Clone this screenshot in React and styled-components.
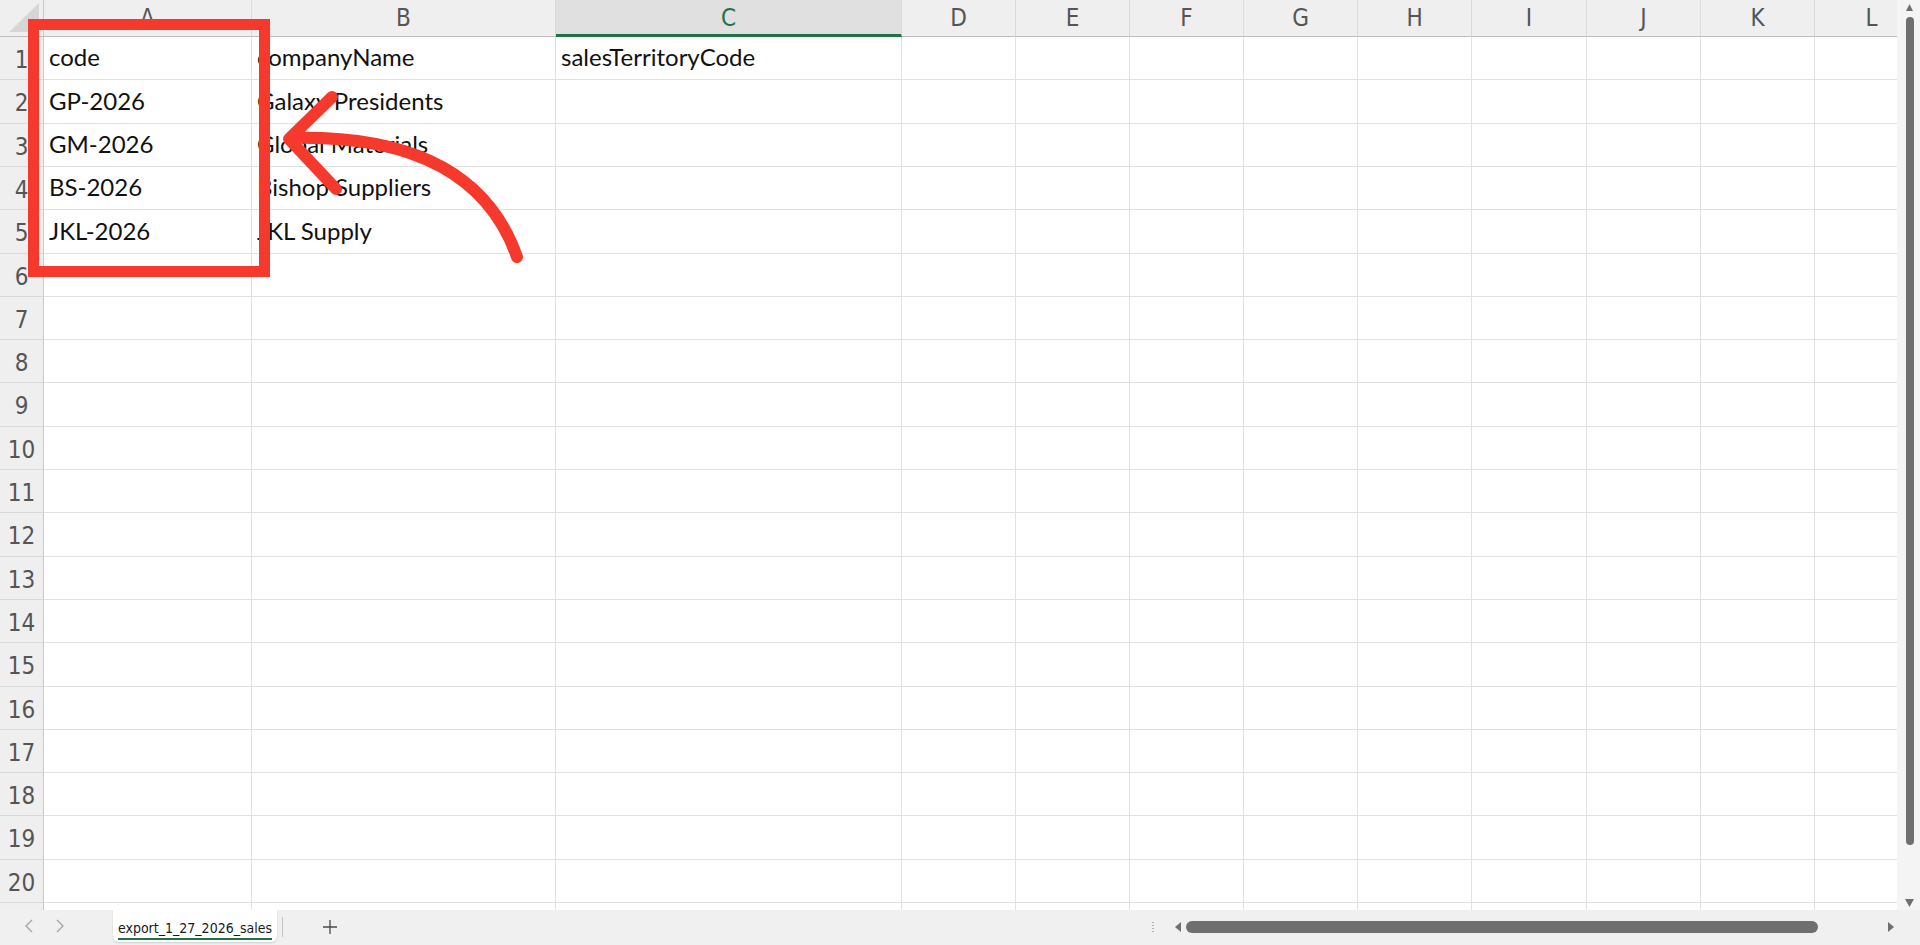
import React from 'react'
import styled, { createGlobalStyle } from 'styled-components'

const GlobalStyle = createGlobalStyle`
  html, body {
    margin: 0;
    padding: 0;
    background: #ffffff;
  }
  body {
    overflow: hidden;
  }
`

const CELL_FONT = `'Lato', 'Open Sans', sans-serif`
const UI_FONT = `'Liberation Sans Narrow', 'DejaVu Sans Condensed', 'Roboto', sans-serif`

const COLUMNS = [
  { key: 'A', w: 208 },
  { key: 'B', w: 304 },
  { key: 'C', w: 346, active: true },
  { key: 'D', w: 114 },
  { key: 'E', w: 114 },
  { key: 'F', w: 114 },
  { key: 'G', w: 114 },
  { key: 'H', w: 114 },
  { key: 'I', w: 115 },
  { key: 'J', w: 114 },
  { key: 'K', w: 114 },
  { key: 'L', w: 114 },
]

const HEADER_H = 37
const ROW_PITCH = 43.3
const ROW_COUNT = 21
const LABELLED_ROWS = 20 // row 21 only shows as a thin strip at the bottom

const DATA = [
  ['code', 'companyName', 'salesTerritoryCode'],
  ['GP-2026', 'Galaxy Presidents'],
  ['GM-2026', 'Global Materials'],
  ['BS-2026', 'Bishop Suppliers'],
  ['JKL-2026', 'JKL Supply'],
]

// row heights rounded so the gridlines land on whole pixels
const rowHeights = Array.from({ length: ROW_COUNT }, (_, i) =>
  Math.round(HEADER_H + ROW_PITCH * (i + 1)) - Math.round(HEADER_H + ROW_PITCH * i)
)

const Window = styled.div`
  width: 1920px;
  height: 945px;
  display: grid;
  grid-template-rows: 910px 35px;
  background: #f0f0f0;
  overflow: hidden;
`

const Top = styled.div`
  display: grid;
  grid-template-columns: 1897px 23px;
  min-height: 0;
`

const Sheet = styled.div`
  position: relative;
  overflow: hidden;
  background: #ffffff;
`

const Row = styled.div`
  display: flex;
  height: ${({ $h }) => $h}px;
`

const Corner = styled.div`
  flex: 0 0 44px;
  height: 100%;
  box-sizing: border-box;
  background: #efefef;
  border-right: 1px solid #c9c9c9;
  border-bottom: 1px solid #bdbdbd;
  display: flex;
  align-items: flex-end;
  justify-content: flex-end;
  padding: 0 4px 4px 0;
`

const ColHead = styled.div`
  flex: 0 0 ${({ $w }) => $w}px;
  height: 100%;
  box-sizing: border-box;
  display: flex;
  align-items: center;
  justify-content: center;
  background: ${({ $active }) => ($active ? '#e0e0e0' : '#efefef')};
  border-right: 1px solid #d9d9d9;
  border-bottom: ${({ $active }) => ($active ? '3px solid #217346' : '1px solid #bdbdbd')};
  color: ${({ $active }) => ($active ? '#217346' : '#555555')};
  font-family: ${UI_FONT};
  font-size: 24px;
  padding-top: ${({ $active }) => ($active ? '2px' : '0')};
`

const RowHead = styled.div`
  flex: 0 0 44px;
  height: 100%;
  box-sizing: border-box;
  display: flex;
  align-items: center;
  justify-content: center;
  padding-top: 3px;
  background: #efefef;
  border-right: 1px solid #c9c9c9;
  border-bottom: 1px solid #dadada;
  color: #555555;
  font-family: ${UI_FONT};
  font-size: 24px;
`

const Cell = styled.div`
  flex: 0 0 ${({ $w }) => $w}px;
  height: 100%;
  box-sizing: border-box;
  display: flex;
  align-items: flex-end;
  padding: 0 0 7px 5px;
  border-right: 1px solid #e1e1e1;
  border-bottom: 1px solid #e1e1e1;
  font-family: ${CELL_FONT};
  font-size: 24px;
  line-height: 1.2;
  color: #111111;
  white-space: nowrap;
  overflow: visible;
`

const Annotation = styled.svg`
  position: absolute;
  left: 0;
  top: 0;
  pointer-events: none;
`

const VScroll = styled.div`
  background: #f4f4f4;
  display: flex;
  flex-direction: column;
  align-items: center;
  padding: 4px 0 3px 2px;
`

const VThumb = styled.div`
  width: 8px;
  height: 828px;
  margin: 6px 0 auto;
  border-radius: 4px;
  background: #6f6f6f;
`

const BottomBar = styled.div`
  display: flex;
  align-items: stretch;
  background: #f0f0f0;
  font-family: ${UI_FONT};
`

const NavGroup = styled.div`
  flex: 0 0 113px;
  display: flex;
  align-items: center;
  gap: 23px;
  padding: 0 0 4px 25px;
  box-sizing: border-box;
  color: #a3a3a3;
`

const Tab = styled.div`
  flex: 0 0 164px;
  height: 32px;
  box-sizing: border-box;
  background: #ffffff;
  border-radius: 0 0 6px 6px;
  box-shadow: 0 1px 2px rgba(0, 0, 0, 0.14);
  display: flex;
  align-items: center;
  justify-content: center;
`

const TabLabel = styled.span`
  font-size: 14px;
  font-weight: 500;
  color: #1a1a1a;
  white-space: nowrap;
  padding: 3px 0 2px;
  border-bottom: 2px solid #217346;
  margin-top: 4px;
`

const TabDivider = styled.div`
  flex: 0 0 1px;
  height: 20px;
  align-self: center;
  margin: 0 0 2px 5px;
  background: #c4c4c4;
`

const AddSheet = styled.div`
  flex: 0 0 auto;
  display: flex;
  align-items: center;
  padding: 0 0 2px 40px;
  color: #4a4a4a;
`

const HScrollArea = styled.div`
  margin-left: auto;
  flex: 0 0 775px;
  display: flex;
  align-items: center;
  padding-bottom: 2px;
  box-sizing: border-box;
`

const Splitter = styled.div`
  width: 2px;
  height: 12px;
  margin: 0 21px 0 7px;
  background-image: radial-gradient(circle, #b3b3b3 0.9px, transparent 1.1px);
  background-size: 2px 3px;
`

const HThumb = styled.div`
  flex: 0 0 632px;
  height: 12px;
  margin-left: 5px;
  border-radius: 6px;
  background: #6f6f6f;
`

const ArrowGlyph = styled.svg`
  display: block;
  flex: 0 0 auto;
`

const HRight = styled(ArrowGlyph)`
  margin-left: 70px;
`

const CornerMark = () => (
  <svg width="30" height="29" viewBox="0 0 30 29">
    <polygon points="30,0 30,29 0,29" fill="#d6d6d6" />
  </svg>
)

const Chevron = ({ dir }) => (
  <svg width="8" height="14" viewBox="0 0 8 14">
    <polyline
      points={dir === 'left' ? '7,1 1,7 7,13' : '1,1 7,7 1,13'}
      fill="none"
      stroke="currentColor"
      strokeWidth="1.3"
    />
  </svg>
)

const Plus = () => (
  <svg width="14" height="14" viewBox="0 0 14 14">
    <path d="M7 0 V14 M0 7 H14" stroke="currentColor" strokeWidth="1.3" />
  </svg>
)

const Tri = ({ dir, w = 8, h = 8 }) => {
  const pts = {
    up: `0,${h} ${w / 2},0 ${w},${h}`,
    down: `0,0 ${w},0 ${w / 2},${h}`,
    left: `${w},0 ${w},${h} 0,${h / 2}`,
    right: `0,0 ${w},${h / 2} 0,${h}`,
  }[dir]
  return (
    <ArrowGlyph width={w} height={h} viewBox={`0 0 ${w} ${h}`}>
      <polygon points={pts} fill="#6f6f6f" strokeLinejoin="round" />
    </ArrowGlyph>
  )
}

const App = () => {
  return (
    <Window>
      <GlobalStyle />
      <Top>
        <Sheet>
          <Row $h={HEADER_H}>
            <Corner>
              <CornerMark />
            </Corner>
            {COLUMNS.map((c) => (
              <ColHead key={c.key} $w={c.w} $active={c.active}>
                {c.key}
              </ColHead>
            ))}
          </Row>

          {rowHeights.map((h, r) => (
            <Row key={r} $h={h}>
              <RowHead>{r < LABELLED_ROWS ? r + 1 : null}</RowHead>
              {COLUMNS.map((c, ci) => (
                <Cell key={c.key} $w={c.w}>
                  {DATA[r] && DATA[r][ci]}
                </Cell>
              ))}
            </Row>
          ))}

          <Annotation width="600" height="320" viewBox="0 0 600 320">
            <rect
              x="33.5"
              y="24.5"
              width="231"
              height="247"
              fill="none"
              stroke="#f5392c"
              strokeWidth="11"
            />
            <path
              d="M517 257 C490 180 420 135 292 138"
              fill="none"
              stroke="#f5392c"
              strokeWidth="12"
              strokeLinecap="round"
            />
            <polyline
              points="332,97 289,139 336,189"
              fill="none"
              stroke="#f5392c"
              strokeWidth="12"
              strokeLinecap="round"
              strokeLinejoin="round"
            />
          </Annotation>
        </Sheet>

        <VScroll>
          <Tri dir="up" w={7} h={7} />
          <VThumb />
          <Tri dir="down" w={9} h={8} />
        </VScroll>
      </Top>

      <BottomBar>
        <NavGroup>
          <Chevron dir="left" />
          <Chevron dir="right" />
        </NavGroup>
        <Tab>
          <TabLabel>export_1_27_2026_sales</TabLabel>
        </Tab>
        <TabDivider />
        <AddSheet>
          <Plus />
        </AddSheet>

        <HScrollArea>
          <Splitter />
          <Tri dir="left" w={6} h={10} />
          <HThumb />
          <HRight as="svg" width="6" height="10" viewBox="0 0 6 10">
            <polygon points="0,0 6,5 0,10" fill="#6f6f6f" />
          </HRight>
        </HScrollArea>
      </BottomBar>
    </Window>
  )
}

export default App
